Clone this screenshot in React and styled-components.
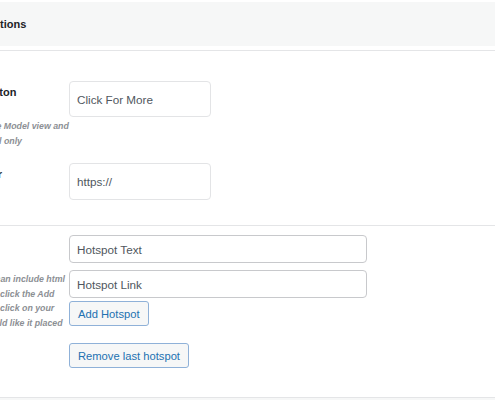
import React from 'react';
import styled, { createGlobalStyle } from 'styled-components';

const GlobalStyle = createGlobalStyle`
  html, body {
    margin: 0;
    padding: 0;
    background: #ffffff;
    overflow: hidden;
  }
  body {
    font-family: "Liberation Sans", Arial, sans-serif;
    color: #1d2327;
  }
`;

const Page = styled.div`
  width: 495px;
  height: 400px;
  overflow: hidden;
  background: #ffffff;
`;

const Header = styled.div`
  margin-top: 2px;
  height: 44px;
  background: #f6f7f7;
  display: flex;
  align-items: center;
`;

const Title = styled.h2`
  margin: 0;
  font-size: 11px;
  font-weight: 700;
  color: #1d2327;
  white-space: nowrap;
  margin-left: ${(p) => p.$cut || 0}px;
`;

const Divider = styled.div`
  height: 1px;
  background: #e4e5e7;
  margin-top: ${(p) => p.$top || 0}px;
`;

const Section = styled.div`
  padding: ${(p) => p.$pad};
  display: flex;
  flex-direction: column;
  gap: ${(p) => p.$gap || 0}px;
`;

const Row = styled.div`
  display: grid;
  grid-template-columns: 69px 1fr;
  align-items: start;
`;

const LabelCell = styled.div`
  padding-top: ${(p) => p.$top || 0}px;
  white-space: nowrap;
`;

const Label = styled.div`
  font-size: 11px;
  line-height: 16px;
  font-weight: 700;
  color: #1d2327;
  margin-left: ${(p) => p.$cut || 0}px;
`;

const Description = styled.div`
  margin-top: ${(p) => p.$top || 0}px;
  font-size: 8.8px;
  line-height: 14.6px;
  font-style: italic;
  font-weight: 700;
  color: #8c8f94;
`;

const Line = styled.div`
  margin-left: ${(p) => p.$cut || 0}px;
`;

const Field = styled.div`
  display: flex;
  flex-direction: column;
  align-items: flex-start;
`;

const Input = styled.input`
  box-sizing: border-box;
  width: ${(p) => p.$w}px;
  height: ${(p) => p.$h}px;
  margin: 0 0 ${(p) => p.$after || 0}px 0;
  padding: 0 7px;
  border: 1px solid ${(p) => (p.$soft ? '#e3e4e6' : '#c8c9cc')};
  border-radius: 4px;
  background: #ffffff;
  font-family: "Liberation Sans", Arial, sans-serif;
  font-size: 11.7px;
  color: #50575e;
  outline: none;
`;

const Button = styled.button`
  box-sizing: border-box;
  height: 25px;
  margin: 0 0 ${(p) => p.$after || 0}px 0;
  padding: 0 8px;
  border: 1px solid #8fb1d8;
  border-radius: 3px;
  background: #f6f7f7;
  color: #2271b1;
  font-family: "Liberation Sans", Arial, sans-serif;
  font-size: 11.2px;
  cursor: pointer;
`;

const Footer = styled.div`
  height: 5px;
  background: #f6f7f7;
  border-top: 1px solid #e4e5e7;
`;

export default function App() {
  return (
    <Page>
      <GlobalStyle />
      <Header>
        <Title $cut={-15.3}>Options</Title>
      </Header>
      <Divider $top={4} />

      <Section $pad="30px 0 25px 0" $gap={15}>
        <Row>
          <LabelCell $top={3}>
            <Label $cut={-19}>Button</Label>
            <Description $top={19}>
              <Line $cut={-3.5}>e Model view and</Line>
              <Line $cut={-1}>l only</Line>
            </Description>
          </LabelCell>
          <Input $w={142} $h={36} $soft defaultValue="Click For More" />
        </Row>
        <Row>
          <LabelCell $top={3}>
            <Label $cut={-36.5}>Anchor</Label>
          </LabelCell>
          <Input $w={142} $h={37} $soft defaultValue="https://" />
        </Row>
      </Section>

      <Divider />

      <Section $pad="9px 0 29px 0">
        <Row>
          <LabelCell $top={37}>
            <Description>
              <Line $cut={-4.5}>can include html</Line>
              <Line>click the Add</Line>
              <Line>click on your</Line>
              <Line $cut={-0.5}>ld like it placed</Line>
            </Description>
          </LabelCell>
          <Field>
            <Input $w={298} $h={28} $after={7} defaultValue="Hotspot Text" />
            <Input $w={298} $h={28} $after={3} defaultValue="Hotspot Link" />
            <Button $after={17}>Add Hotspot</Button>
            <Button>Remove last hotspot</Button>
          </Field>
        </Row>
      </Section>

      <Footer />
    </Page>
  );
}
